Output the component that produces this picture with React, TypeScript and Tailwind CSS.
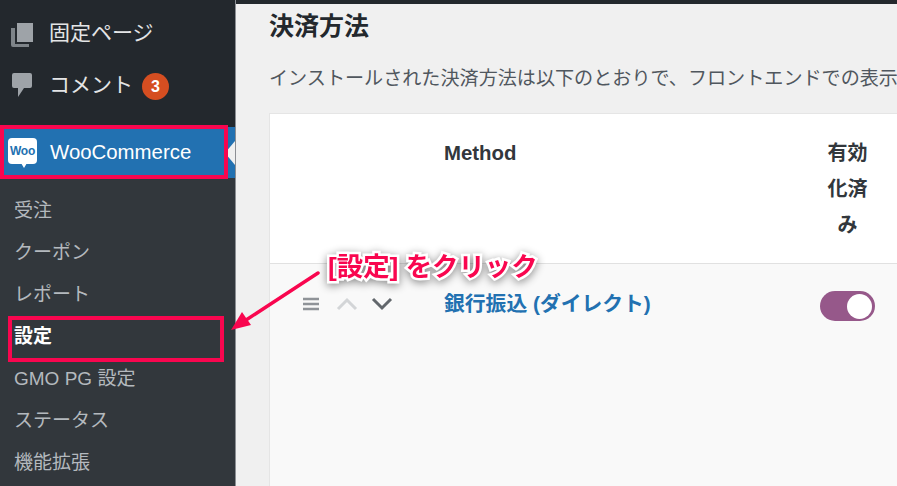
const font = "font-['Liberation_Sans','Noto_Sans_CJK_JP',sans-serif]";

const subMenu = [
  { label: "受注" },
  { label: "クーポン" },
  { label: "レポート" },
  { label: "設定", current: true },
  { label: "GMO PG 設定" },
  { label: "ステータス" },
  { label: "機能拡張" },
];

const Sidebar = () => (
  <aside className="flex w-[236px] shrink-0 flex-col border-r border-[#8c8f94] bg-[#32373c]">
    <div className="flex flex-col bg-[#23282d] pt-[7px] pb-[16px]">
      <div className="flex h-[52px] items-center pl-[11px] text-[21px] text-[#e4e5e6]">
        <svg width="22" height="25" viewBox="0 0 22 25" className="mr-[16px] mt-[4px]" fill="#9ea3a8">
          <path d="M6 0h16v19H6z" />
          <path d="M0 5h4v16h14v3H2a2 2 0 0 1-2-2z" opacity="0.75" />
        </svg>
        固定ページ
      </div>
      <div className="flex h-[52px] items-center pl-[12px] text-[21px] text-[#e4e5e6]">
        <svg width="20" height="24" viewBox="0 0 20 24" className="mr-[17px]" fill="#9ea3a8">
          <path d="M2 0h16a2 2 0 0 1 2 2v11a2 2 0 0 1-2 2h-6l-6 9v-9H2a2 2 0 0 1-2-2V2a2 2 0 0 1 2-2z" />
        </svg>
        コメント
        <span className="ml-[9px] mt-[3px] flex h-[27px] w-[27px] items-center justify-center rounded-full bg-[#d54e21] text-[16px] font-bold text-white">
          3
        </span>
      </div>
    </div>
    <div className="relative flex h-[51px] items-center bg-[#2271b1] pl-[8px] text-[20.4px] text-white">
      <div className="relative mb-[4px] mr-[13px] flex h-[26px] w-[29px] items-center justify-center rounded-[4px] bg-white">
        <span className="text-[12px] font-bold tracking-[-0.3px] text-[#2271b1]">Woo</span>
        <div className="absolute -bottom-[4px] left-[13px] h-0 w-0 border-x-[3px] border-t-[5px] border-x-transparent border-t-white" />
      </div>
      WooCommerce
      <div className="absolute right-0 top-[14px] h-0 w-0 border-y-[12px] border-r-[10px] border-y-transparent border-r-[#f0f0f0]" />
    </div>
    <div className="flex flex-col pt-[12px]">
      {subMenu.map((item) => (
        <div
          key={item.label}
          className={`flex h-[42px] items-center pl-[14px] text-[19px] ${
            item.current ? "font-bold text-white" : "text-[#b4b9be]"
          }`}
        >
          {item.label}
        </div>
      ))}
    </div>
  </aside>
);

const Toggle = () => (
  <div className="flex h-[30px] w-[55px] items-center justify-end rounded-full bg-[#96588a] pr-[3px]">
    <div className="h-[25px] w-[25px] rounded-full bg-white" />
  </div>
);

const RowControls = () => (
  <div className="flex items-center">
    <svg width="18" height="14" viewBox="0 0 18 14" stroke="#8f9398" strokeWidth="2.4">
      <path d="M1 2h16M1 7h16M1 12h16" />
    </svg>
    <svg width="22" height="14" viewBox="0 0 22 14" className="ml-[16px]" fill="none" stroke="#d3d5d7" strokeWidth="3">
      <path d="M2 12l9-9 9 9" />
    </svg>
    <svg width="22" height="14" viewBox="0 0 22 14" className="ml-[13px]" fill="none" stroke="#62676c" strokeWidth="3">
      <path d="M2 2l9 9 9-9" />
    </svg>
  </div>
);

const Main = () => (
  <main className="flex min-w-0 flex-1 flex-col overflow-hidden bg-[#f0f0f0]">
    <div className="h-[4px] shrink-0 bg-[#23282d]" />
    <div className="flex flex-col pl-[33px]">
      <h2 className="mt-[6px] h-[32px] text-[25px] font-bold leading-[32px] text-[#23282d]">決済方法</h2>
      <p className="mt-[25px] h-[24px] whitespace-nowrap text-[19.1px] leading-[24px] text-[#50575e]">
        インストールされた決済方法は以下のとおりで、フロントエンドでの表示
      </p>
      <div className="mt-[22px] w-[700px] border-l border-t border-[#e5e5e5] bg-white">
        <div className="flex h-[150px] border-b border-[#e1e1e1] pt-[21px]">
          <div className="w-[174px]" />
          <div className="w-[383px] text-[20.4px] font-bold leading-[36px] text-[#32373c]">Method</div>
          <div className="w-[41px] text-center text-[20px] font-bold leading-[36px] text-[#32373c]">有効化済み</div>
        </div>
        <div className="flex h-[230px] bg-[#f9f9f9]">
          <div className="w-[174px] pl-[32px] pt-[33px]">
            <RowControls />
          </div>
          <div className="w-[376px] pt-[26px] text-[20.8px] font-bold leading-[28px] text-[#2271b1]">
            銀行振込 (ダイレクト)
          </div>
          <div className="pt-[27px]">
            <Toggle />
          </div>
        </div>
      </div>
    </div>
  </main>
);

const Annotations = () => (
  <>
    <div className="absolute left-0 top-[125px] h-[54px] w-[228px] border-[4px] border-[#f9064f]" />
    <div className="absolute left-[8px] top-[316px] h-[46px] w-[216px] border-[4px] border-[#f9064f]" />
    <svg className="absolute left-[225px] top-[265px]" width="100" height="72" viewBox="0 0 100 72">
      <path d="M93 8L18 57" stroke="#f9064f" strokeWidth="3.5" strokeLinecap="round" />
      <path d="M6 65l11-18 9 13z" fill="#f9064f" />
    </svg>
    <div className="absolute left-[328px] top-[250px] whitespace-nowrap text-[26.4px] font-bold leading-[34px] text-[#f9064f] [-webkit-text-stroke:5px_white] [paint-order:stroke_fill] drop-shadow-[0_2px_4px_rgba(0,0,0,0.45)]">
      [設定] をクリック
    </div>
  </>
);

export default function App() {
  return (
    <div className={`relative flex h-[486px] w-[897px] overflow-hidden ${font}`}>
      <Sidebar />
      <Main />
      <Annotations />
    </div>
  );
}
